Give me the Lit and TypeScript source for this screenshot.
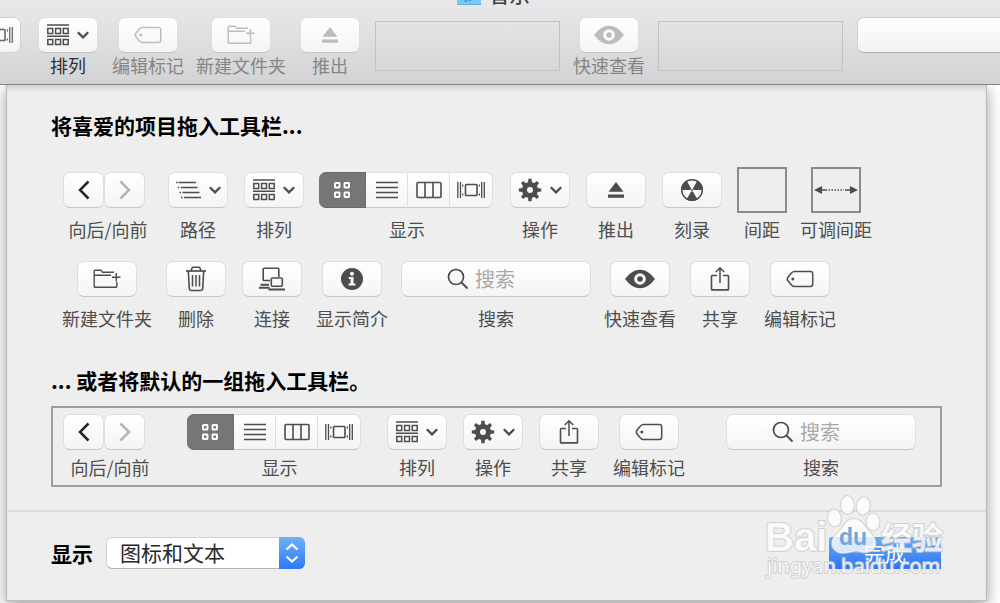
import { LitElement, html, svg, css, nothing, TemplateResult } from "lit";
import { customElement, property } from "lit/decorators.js";

type Icon = { w: number; h: number; art: TemplateResult };

const gearTeeth = [0, 45, 90, 135, 180, 225, 270, 315];

const icons: Record<string, Icon> = {
  back: { w: 12, h: 20, art: svg`<path d="M10.5 1.5 2 10l8.5 8.5" stroke-width="2.5"/>` },
  forward: { w: 12, h: 20, art: svg`<path d="M1.5 1.5 10 10l-8.500 8.500" stroke-width="2.500"/>` },
  chevron: { w: 12, h: 8, art: svg`<path d="M.8 1.200 6 6.300l5.200-5.100" stroke-width="2.300"/>` },
  path: {
    w: 25, h: 18,
    art: svg`<path d="M2.500 1.500H20M4.800 6.500H21.500M6.500 11.500H23.500M8 16.500H25" stroke-width="1.500"/>
      <path d="M0 1.500h1.500M1.800 6.500h1.500M3.500 11.500H5M5 16.500h1.500" stroke-width="1.700"/>`,
  },
  arrange: {
    w: 22, h: 22,
    art: svg`<path d="M0 1h22M0 12.200h22" stroke-width="1.600"/>
      <path d="M.8 4.400h4.900v5H.8zM8.600 4.400h4.900v5H8.600zM16.300 4.400h4.900v5h-4.900zM.8 15.600h4.900v5H.8zM8.600 15.600h4.900v5H8.600zM16.300 15.600h4.900v5h-4.900z" stroke-width="1.500"/>`,
  },
  grid: {
    w: 18, h: 18,
    art: svg`<g stroke-width="1.900"><rect x="2" y="2" width="4.500" height="4.500" rx=".5"/><rect x="11.500" y="2" width="4.500" height="4.500" rx=".5"/><rect x="2" y="11.500" width="4.500" height="4.500" rx=".5"/><rect x="11.500" y="11.500" width="4.500" height="4.500" rx=".5"/></g>`,
  },
  list: { w: 22, h: 18, art: svg`<path d="M0 1.500h22M0 6.500h22M0 11.500h22M0 16.500h22" stroke-width="1.600"/>` },
  columns: { w: 26, h: 18, art: svg`<rect x="1" y="1.500" width="24" height="15" rx="1.200" stroke-width="1.600"/><path d="M9 2v14M17 2v14" stroke-width="1.600"/>` },
  cover: {
    w: 28, h: 18,
    art: svg`<rect x="8.500" y="3.500" width="11.500" height="11" rx=".8" stroke-width="1.600"/>
      <path d="M.8 1v16M3.500 1v16M24.700 1v16M27.300 1v16" stroke-width="1.300"/>
      <path d="M5.800 3.500v11M22.400 3.500v11" stroke-width="1.200" stroke-dasharray="2 7 2"/>`,
  },
  gear: {
    w: 24, h: 24,
    art: svg`<circle cx="12" cy="12" r="5.500" stroke-width="5"/>
      ${gearTeeth.map((a) => svg`<path class="solid" d="M10 5 10.400 .8h3.200l.4 4.200z" transform="rotate(${a} 12 12)"/>`)}`,
  },
  eject: { w: 18, h: 18, art: svg`<path class="solid" d="M9 1l7.500 9.700h-15zM1 13.500h16v3.200H1z"/>` },
  burn: {
    w: 24, h: 24,
    art: svg`<circle cx="12" cy="12" r="10.300" stroke-width="1.500"/>
      <path class="solid" d="M12 12 6.500 21.500a11 11 0 0 0 11 0zM12 12H1A11 11 0 0 1 6.500 2.500zM12 12h11a11 11 0 0 0-5.500-9.500z"/>
      <circle class="hole" cx="12" cy="12" r="1.300"/>`,
  },
  flex: {
    w: 44, h: 10,
    art: svg`<path class="solid" d="M0 5l8-4v8zM44 5l-8-4v8z"/><path d="M7 5h6M31 5h6" stroke-width="1.600"/><path d="M14.500 5h15.500" stroke-width="1.500" stroke-dasharray="1.500 1.500"/>`,
  },
  folder: {
    w: 28, h: 20,
    art: svg`<path d="M21 3.300H9.500L8 1.200H2q-.8 0-.8.800v15.500q0 .8.8.800h21q.8 0 .8-.8V13M1.200 6.300H18" stroke-width="1.400"/><path d="M19 8.300h8.500M23.300 4v8.500" stroke-width="1.500"/>`,
  },
  trash: {
    w: 22, h: 26,
    art: svg`<path d="M1 5h20" stroke-width="1.700"/><path d="M6 5l1-3q.3-.8 1-.800h6q.7 0 1 .8l1 3M3.300 5l1 17.500q.2 2 2 2h9.400q1.800 0 2-2L18.700 5" stroke-width="1.600"/><path d="M7.500 9v11.500M11 9v11.500M14.500 9v11.500" stroke-width="1.500"/>`,
  },
  connect: {
    w: 26, h: 24,
    art: svg`<path d="M11 13.500H5q-.8 0-.8-.8V2q0-.8.8-.8h14q.8 0 .8.800v8" stroke-width="1.600"/><rect x="12.300" y="11" width="11" height="8.300" rx="1" stroke-width="1.600"/><path d="M0 20.700h10.500M1.500 17.700H10M9.500 22.500H26" stroke-width="2"/>`,
  },
  info: {
    w: 24, h: 24,
    art: svg`<circle class="solid" cx="12" cy="12" r="11"/><circle class="paper" cx="12" cy="6.700" r="2"/><path class="paper" d="M8.800 10h4.700v6.500h2v2H8.600v-2h2V12H8.800z"/>`,
  },
  search: { w: 22, h: 22, art: svg`<circle cx="9" cy="9" r="7.500" stroke-width="1.700"/><path d="M14.500 14.500l6 6" stroke-width="1.900"/>` },
  eye: {
    w: 30, h: 20,
    art: svg`<path class="solid" d="M0 10Q7 .7 15 .7T30 10q-7 9.300-15 9.300T0 10z"/><circle class="paper" cx="15" cy="10" r="5.800"/><circle class="solid" cx="15" cy="10" r="2.800"/>`,
  },
  share: {
    w: 20, h: 26,
    art: svg`<path d="M7 9.500H2.200q-.7 0-.7.700v13q0 .7.7.700h15.600q.7 0 .7-.7v-13q0-.7-.7-.7H13" stroke-width="1.600"/><path d="M10 17V2M5.800 6 10 1.700 14.200 6" stroke-width="1.500"/>`,
  },
  tag: {
    w: 28, h: 18,
    art: svg`<path d="M8.300 1.500H24.500q2.200 0 2.200 2.200v10.600q0 2.200-2.200 2.200H8.300Q6.500 16.500 4.500 14L1.800 10.500Q.8 9 1.800 7.500L4.500 4Q6.500 1.500 8.300 1.500z" stroke-width="1.500"/><circle class="solid" cx="6.800" cy="9" r="1.500"/>`,
  },
};

const icon = (name: string) => {
  const { w, h, art } = icons[name];
  return html`<svg class="icon" width=${w} height=${h} viewBox="0 0 ${w} ${h}" aria-hidden="true">${art}</svg>`;
};

const cjk = css`"Noto Sans CJK SC", "Noto Sans", sans-serif`;

@customElement("tool-item")
class ToolItem extends LitElement {
  @property() kind = "button";
  @property() icon = "";
  @property() label = "";
  @property({ type: Boolean }) menu = false;
  @property({ type: Boolean }) disabled = false;

  static styles = css`
    :host { display: flex; flex-direction: column; align-items: center; flex: none; min-width: 62px; color: #4d4d4d; font: 18px/20px ${cjk}; }
    .icon { display: block; flex: none; fill: none; stroke: currentColor; }
    .solid { fill: currentColor; stroke: none; }
    .paper { fill: #fbfbfb; stroke: none; }
    .hole { fill: currentColor; stroke: #fbfbfb; stroke-width: .6; }
    .art { display: flex; align-items: center; height: var(--art-height, 36px); margin-bottom: var(--label-gap, 6px); }
    .label { white-space: nowrap; color: var(--label-color, #4d4d4d); }
    .key, .field {
      box-sizing: border-box; height: 36px; margin: 0; padding: 0;
      display: flex; align-items: center; justify-content: center;
      color: inherit; font: inherit;
      background: linear-gradient(#fff, #f4f4f4);
      border: 1px solid #dedede; border-bottom-color: #c6c6c6; border-radius: 7px;
    }
    .key { width: 60px; gap: 8px; }
    .key:disabled { color: #bcbcbc; }
    .pair, .segments { display: flex; align-self: flex-start; }
    .pair .key { width: 41px; color: #262626; }
    .pair .key:disabled { color: #b4b4b4; }
    .segments .key { width: 42px; border-radius: 0; border-left: 0; }
    .segments .key:first-child { width: 47px; color: #fff; background: #757675; border-color: #6b6b6b; border-radius: 7px 0 0 7px; }
    .segments .key:last-child { width: 43px; border-radius: 0 7px 7px 0; }
    .field { width: 190px; justify-content: flex-start; gap: 6px; padding-left: 45px; }
    .field input { flex: 1; min-width: 0; padding: 0; border: 0; outline: 0; background: none; font: 20px/28px ${cjk}; }
    .field input::placeholder { color: #a9a9a9; opacity: 1; }
    .box { box-sizing: border-box; width: 50px; height: 46px; border: 2px solid #8a8a8a; display: flex; align-items: center; justify-content: center; }
  `;

  private art() {
    switch (this.kind) {
      case "pair":
        return html`<div class="art pair">
          <button class="key" aria-label="向后">${icon("back")}</button>
          <button class="key" aria-label="向前" disabled>${icon("forward")}</button>
        </div>`;
      case "segments":
        return html`<div class="art segments">
          ${["grid", "list", "columns", "cover"].map((n) => html`<button class="key" aria-label=${n}>${icon(n)}</button>`)}
        </div>`;
      case "search":
        return html`<div class="art"><div class="field">
          ${icon("search")}<input id="q" type="text" placeholder="搜索" />
        </div></div>`;
      case "box":
        return html`<div class="art"><div class="box">${this.icon ? icon(this.icon) : nothing}</div></div>`;
      default:
        return html`<div class="art"><button class="key" aria-label=${this.label} ?disabled=${this.disabled}>
          ${icon(this.icon)}${this.menu ? icon("chevron") : nothing}
        </button></div>`;
    }
  }

  render() {
    return html`${this.art()}${this.kind === "search"
      ? html`<label class="label" for="q">${this.label}</label>`
      : html`<span class="label">${this.label}</span>`}`;
  }
}

@customElement("app-root")
class AppRoot extends LitElement {
  static styles = css`
    :host { display: block; min-height: 100vh; overflow: hidden; background: #fff; color: #000; font: 21px/28px ${cjk}; }
    .icon { display: block; flex: none; fill: none; stroke: currentColor; }
    .window-bar { position: relative; z-index: 1; overflow: hidden; background: linear-gradient(#e9e9eb, #d3d3d5); border-bottom: 1px solid #858387; }
    .title { display: flex; align-items: flex-end; justify-content: center; gap: 9px; height: 7px; padding-right: 14px; color: #404040; font-size: 20px; line-height: 24px; font-weight: 500; }
    .title svg { display: block; flex: none; margin-bottom: 2px; }
    .tools { display: flex; align-items: flex-start; gap: 14px; height: 67px; padding-top: 10px; --label-gap: 2px; --label-color: #858585; }
    .current { --label-color: #303030; }
    .cut { display: flex; justify-content: flex-end; width: 23px; overflow: hidden; }
    .edge-key { box-sizing: border-box; flex: none; display: flex; align-items: center; justify-content: flex-end; width: 60px; height: 36px; margin-right: 2px; padding: 0 7px; color: #666; background: linear-gradient(#fff, #f4f4f4); border: 1px solid #d2d2d2; border-radius: 7px; }
    .slot { box-sizing: border-box; width: 185px; height: 50px; margin-top: 4px; border: 1px solid #c2c2c2; }
    .edge-search { box-sizing: border-box; flex: 1; min-width: 0; height: 36px; padding: 0 12px; font: 20px/28px ${cjk}; background: linear-gradient(#fff, #f2f2f2); border: 1px solid #d2d2d2; border-right: 0; border-bottom-color: #b0b0b0; border-radius: 7px 0 0 7px; outline: 0; }
    .sheet { position: relative; margin: 0 13px 0 6px; background: #eee; border: solid #bdbdbd; border-width: 0 1px 1px; box-shadow: inset 0 5px 5px -2px #cfcfd1, 0 4px 14px rgba(0, 0, 0, .4); }
    .body { padding: 26px 44px 23px; }
    h2 { margin: 0; font-size: 21px; line-height: 28px; font-weight: 700; }
    .palette { display: flex; flex-direction: column; gap: 17px; margin: 28px 0 38px; padding-left: 12px; --art-height: 46px; }
    .row { display: flex; gap: 14px; }
    .four { width: 70px; }
    .five { width: 88px; }
    .nav { width: 90px; }
    .views { width: 176px; }
    .space { width: 50px; min-width: 50px; }
    .defaults { display: flex; gap: 14px; margin-top: 12px; padding: 6px 24px 8px 10px; border: 2px solid #9d9d9d; --label-gap: 7px; }
    .defaults .nav { width: 94px; margin-right: 16px; }
    .defaults .views { width: 185px; }
    .defaults .find { margin-left: auto; }
    footer { display: flex; align-items: center; gap: 13px; padding: 25px 45px 31px 44px; border-top: 2px solid #dadada; }
    footer label { font-weight: 700; }
    .popup { display: grid; grid-template-columns: 1fr 26px; width: 199px; height: 32px; }
    .popup select { grid-area: 1 / 1 / 2 / 3; box-sizing: border-box; width: 100%; height: 32px; margin: 0; padding: 0 30px 2px 13px; appearance: none; border: 1px solid #cfcfcf; border-bottom-color: #b5b5b5; border-radius: 6px; background: #fff; color: #262626; font: 21px/28px ${cjk}; }
    .cap { grid-area: 1 / 2; display: flex; align-items: center; justify-content: center; border-radius: 0 6px 6px 0; color: #fff; background: linear-gradient(#6fb0f8, #2a7af5); pointer-events: none; z-index: 1; }
    .done { width: 112px; height: 32px; margin-left: auto; padding: 0 0 2px; border: 0; border-radius: 3px 3px 0 0; color: #fff; font: 21px/28px ${cjk}; background: linear-gradient(#68a9f2, #2a76f8); }
    .mark { position: absolute; right: 34px; bottom: 18px; pointer-events: none; }
    .mark .ink { fill: #fff; fill-opacity: .78; stroke: #c9c9c9; stroke-opacity: .75; stroke-width: 2px; paint-order: stroke; }
    .mark .big { font: 700 40px "Liberation Sans", sans-serif; }
    .mark .han { font: 700 31px ${cjk}; }
    .mark .url { font: 20px "Noto Sans", sans-serif; }
    .mark .du { font: 700 23px "Liberation Sans", sans-serif; fill: #6fa6df; }
  `;

  render() {
    return html`
      <header class="window-bar">
        <div class="title">
          <svg width="24" height="20" viewBox="0 0 24 20" aria-hidden="true">
            <rect width="24" height="20" rx="1.500" fill="#7cc8f0" />
            <path d="M0 19.500h24" stroke="#62b2df" />
            <path d="M9 14v3M13 13v3" stroke="#4a9fd2" stroke-width="3" />
          </svg>
          <span>音乐</span>
        </div>
        <div class="tools">
          <div class="cut"><button class="edge-key" aria-label="显示">${icon("cover")}</button></div>
          <tool-item class="current" icon="arrange" menu label="排列"></tool-item>
          <tool-item class="four" icon="tag" disabled label="编辑标记"></tool-item>
          <tool-item class="five" icon="folder" disabled label="新建文件夹"></tool-item>
          <tool-item icon="eject" disabled label="推出"></tool-item>
          <div class="slot"></div>
          <tool-item class="four" icon="eye" disabled label="快速查看"></tool-item>
          <div class="slot"></div>
          <input class="edge-search" type="text" aria-label="搜索" />
        </div>
      </header>
      <main class="sheet">
        <div class="body">
          <h2>将喜爱的项目拖入工具栏...</h2>
          <div class="palette">
            <div class="row">
              <tool-item class="nav" kind="pair" label="向后/向前"></tool-item>
              <tool-item icon="path" menu label="路径"></tool-item>
              <tool-item icon="arrange" menu label="排列"></tool-item>
              <tool-item class="views" kind="segments" label="显示"></tool-item>
              <tool-item icon="gear" menu label="操作"></tool-item>
              <tool-item icon="eject" label="推出"></tool-item>
              <tool-item icon="burn" label="刻录"></tool-item>
              <tool-item class="space" kind="box" label="间距"></tool-item>
              <tool-item class="four" kind="box" icon="flex" label="可调间距"></tool-item>
            </div>
            <div class="row">
              <tool-item class="five" icon="folder" label="新建文件夹"></tool-item>
              <tool-item icon="trash" label="删除"></tool-item>
              <tool-item icon="connect" label="连接"></tool-item>
              <tool-item class="four" icon="info" label="显示简介"></tool-item>
              <tool-item kind="search" label="搜索"></tool-item>
              <tool-item class="four" icon="eye" label="快速查看"></tool-item>
              <tool-item icon="share" label="共享"></tool-item>
              <tool-item class="four" icon="tag" label="编辑标记"></tool-item>
            </div>
          </div>
          <h2>... 或者将默认的一组拖入工具栏。</h2>
          <div class="defaults">
            <tool-item class="nav" kind="pair" label="向后/向前"></tool-item>
            <tool-item class="views" kind="segments" label="显示"></tool-item>
            <tool-item icon="arrange" menu label="排列"></tool-item>
            <tool-item icon="gear" menu label="操作"></tool-item>
            <tool-item icon="share" label="共享"></tool-item>
            <tool-item class="four" icon="tag" label="编辑标记"></tool-item>
            <tool-item class="find" kind="search" label="搜索"></tool-item>
          </div>
        </div>
        <footer>
          <label for="mode">显示</label>
          <div class="popup">
            <select id="mode"><option>图标和文本</option></select>
            <span class="cap">
              <svg class="icon" width="14" height="20" viewBox="0 0 14 20" aria-hidden="true">
                <path d="M1.500 6.500 7 1.500l5.500 5M1.500 13.500l5.500 5 5.500-5" stroke-width="2.200" />
              </svg>
            </span>
          </div>
          <button class="done">完成</button>
        </footer>
        <svg class="mark" width="190" height="90" viewBox="0 0 190 90">
          <text class="ink big" x="3" y="59">Bai</text>
          <g class="ink">
            <ellipse cx="72.500" cy="26" rx="6.500" ry="8.500" transform="rotate(-8 72.500 26)" />
            <ellipse cx="85.300" cy="13" rx="6.500" ry="9" />
            <ellipse cx="101.300" cy="14" rx="6.500" ry="8.800" transform="rotate(8 101.300 14)" />
            <ellipse cx="111" cy="30" rx="6.500" ry="8.500" />
            <path d="M92 27C99 27 102 33 106 38S114 46 113.500 52 107 61 102 60.500 96 59 91.500 59.500 84 61.500 79 61 69.500 56 70 50.500 75 42 79 37 85 27 92 27z" />
          </g>
          <text class="du" x="77" y="53">du</text>
          <text class="ink han" x="119" y="57">经验</text>
          <text class="ink url" x="5" y="81">jingyan.baidu.com</text>
        </svg>
      </main>
    `;
  }
}
